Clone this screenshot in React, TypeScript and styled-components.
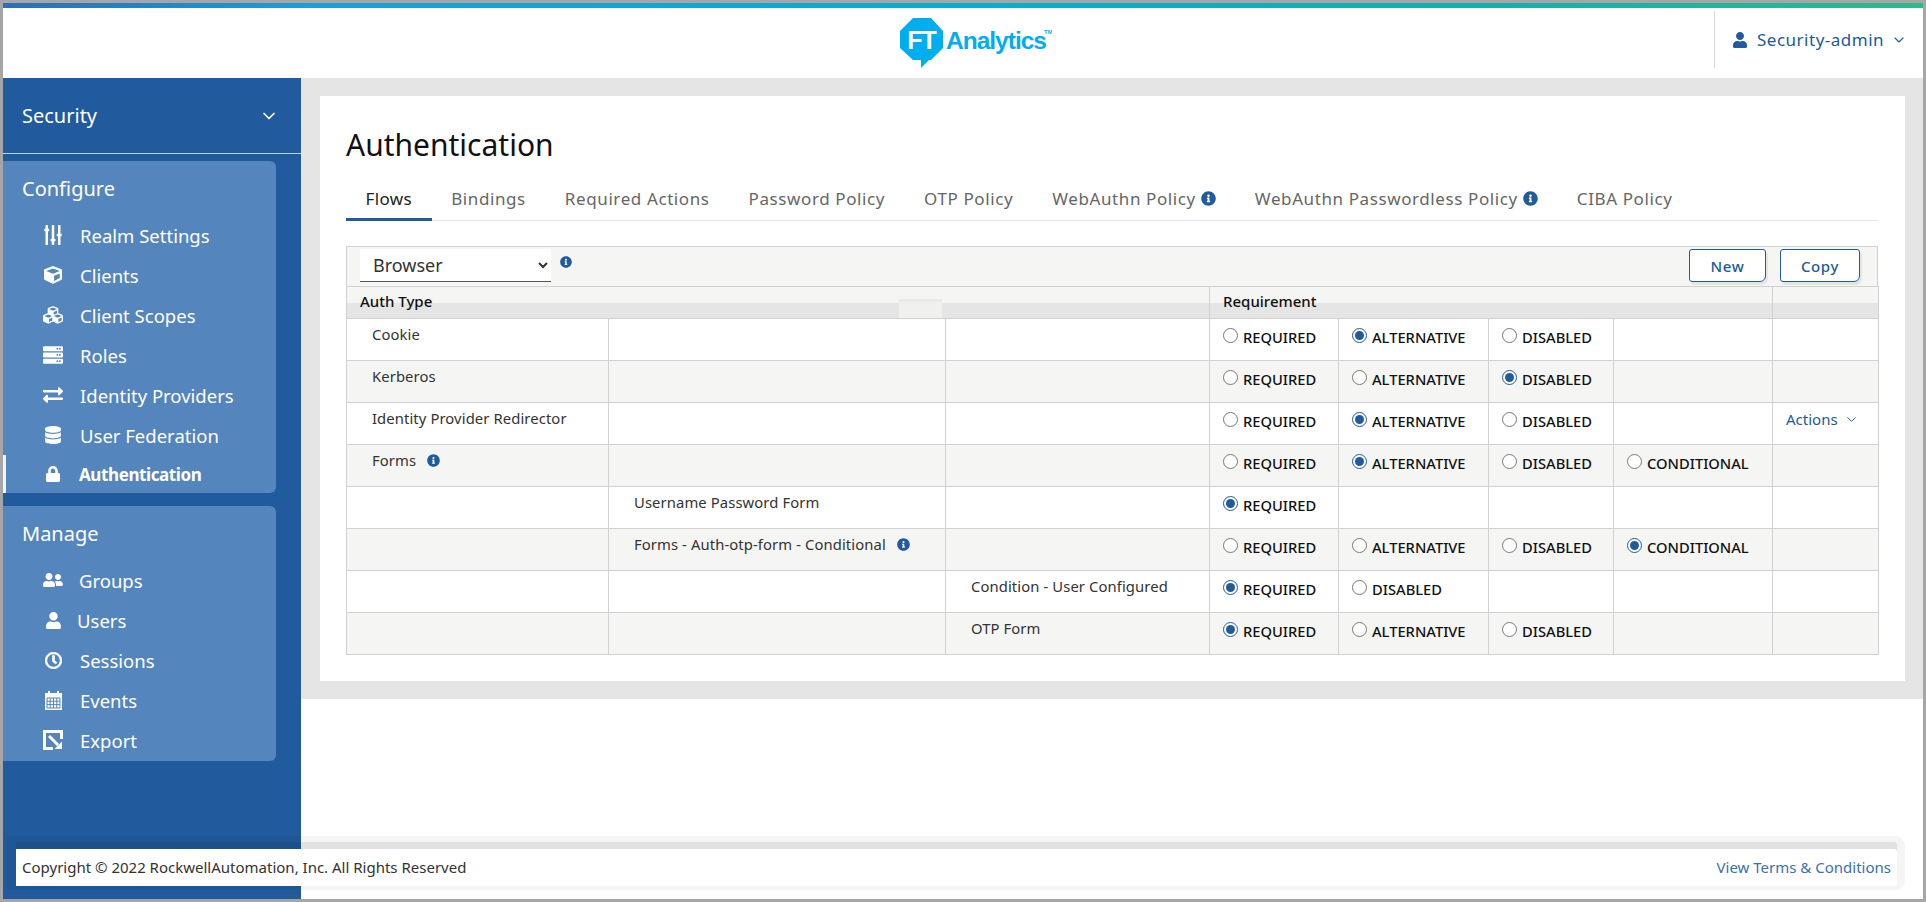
import React from "react";
import styled, { createGlobalStyle } from "styled-components";
import {
  FaSlidersH,
  FaCube,
  FaCubes,
  FaServer,
  FaExchangeAlt,
  FaDatabase,
  FaLock,
  FaUserFriends,
  FaUser,
  FaRegClock,
  FaInfoCircle,
} from "react-icons/fa";
import { ChevronDown } from "lucide-react";

const BLUE = "#215a9d";
const FONT = `"Noto Sans", "Open Sans", sans-serif`;

const GlobalStyle = createGlobalStyle`
  html, body { margin: 0; height: 100%; overflow: hidden; background: #fff; }
  #root { height: 100%; }
  * { box-sizing: border-box; }
`;

const Frame = styled.div`
  position: relative;
  display: flex;
  flex-direction: column;
  height: 902px;
  border: 3px solid #a6a6a6;
  font-family: ${FONT};
  color: #222;
`;

const TopStripe = styled.div`
  flex: none;
  height: 5px;
  background: linear-gradient(90deg, #2f6db5 0, #1b9fdb 320px, #06afd0 1000px, #14b0b0 1500px, #2fb98b 100%);
`;

const Header = styled.header`
  flex: none;
  display: grid;
  grid-template-columns: 1fr auto 1fr;
  align-items: start;
  height: 70px;
  background: #fff;
`;

const LogoBox = styled.div`
  margin: 10px 0 0 26px;
  line-height: 0;
`;

const UserMenu = styled.div`
  justify-self: end;
  display: flex;
  align-items: center;
  width: 209px;
  height: 57px;
  margin-top: 3px;
  padding-left: 17px;
  border-left: 1px solid #d9d9d9;
  color: ${BLUE};
  font-size: 17px;
  letter-spacing: 0.5px;
`;

const UserName = styled.span`
  margin: 0 7px 0 9px;
`;

const Body = styled.div`
  flex: 1;
  display: flex;
  min-height: 0;
`;

const Sidebar = styled.nav`
  flex: none;
  width: 298px;
  background: ${BLUE};
  color: #fff;
`;

const SidebarTitle = styled.div`
  display: flex;
  align-items: center;
  justify-content: space-between;
  height: 76px;
  padding: 0 22px 0 19px;
  border-bottom: 1px solid #c3d2e3;
  font-size: 20px;
`;

const NavPanel = styled.div<{ $top: number; $bottom: number }>`
  width: 273px;
  margin-top: ${(p) => p.$top}px;
  padding: 10px 0 ${(p) => p.$bottom}px;
  background: #5585bd;
  border-radius: 0 6px 6px 0;
`;

const NavHeading = styled.div`
  height: 44px;
  padding-left: 19px;
  font-size: 20px;
  line-height: 36px;
`;

const NavItem = styled.div<{ $active?: boolean; $gap: number }>`
  display: flex;
  align-items: center;
  height: ${(p) => (p.$active ? 38 : 40)}px;
  padding-left: ${(p) => (p.$active ? 37 : 40)}px;
  border-left: ${(p) => (p.$active ? "3px solid #f0f5fb" : "none")};
  font-size: ${(p) => (p.$active ? 17 : 18.5)}px;
  font-weight: ${(p) => (p.$active ? 700 : 400)};
  letter-spacing: ${(p) => (p.$active ? "-0.4px" : "0")};

  & > span:last-child {
    margin-left: ${(p) => p.$gap}px;
  }
`;

const NavIcon = styled.span`
  display: flex;
  justify-content: center;
  flex: none;
  width: 20px;
`;

const VerticalSliders = styled(FaSlidersH)`
  transform: rotate(90deg);
`;

const BoldClock = styled(FaRegClock)`
  stroke: currentColor;
  stroke-width: 24px;
`;

const Main = styled.main`
  flex: 1;
  min-width: 0;
  background: #fff;
`;

const ContentBand = styled.div`
  padding: 18px 18px 18px 19px;
  background: #e5e5e5;
`;

const Card = styled.section`
  height: 585px;
  padding: 24px 27px 0 26px;
  background: #fff;
`;

const Title = styled.h1`
  margin: 0;
  height: 50px;
  font-size: 30px;
  font-weight: 400;
  line-height: 50px;
  color: #111;
`;

const Tabs = styled.div`
  display: flex;
  height: 44px;
  margin: 7px 0 25px;
  border-bottom: 1px solid #e5e5e5;
`;

const Tab = styled.div<{ $active?: boolean }>`
  display: flex;
  align-items: center;
  gap: 5px;
  height: 44px;
  padding: 2px 19.5px 0;
  border-bottom: 3px solid ${(p) => (p.$active ? BLUE : "transparent")};
  color: ${(p) => (p.$active ? "#222" : "#666")};
  font-size: 17px;
  letter-spacing: ${(p) => (p.$active ? "0.4px" : "0.6px")};
`;

const Info = styled(FaInfoCircle)`
  flex: none;
  color: ${BLUE};
`;

const Toolbar = styled.div`
  display: flex;
  align-items: flex-start;
  height: 40px;
  padding: 2px 17px 0 13px;
  border: 1px solid #d1d1d1;
  border-bottom: none;
  background: #f5f5f3;
`;

const FlowSelect = styled.select`
  width: 191px;
  height: 33px;
  padding-left: 9px;
  border: none;
  border-bottom: 1px solid #555;
  border-radius: 0;
  background: #fff;
  color: #333;
  font-family: ${FONT};
  font-size: 18px;
`;

const SelectInfo = styled.span`
  margin: 7px auto 0 9px;
  line-height: 0;
`;

const OutlineButton = styled.button<{ $width: number }>`
  width: ${(p) => p.$width}px;
  height: 33px;
  margin-left: 14px;
  border: 1.5px solid ${BLUE};
  border-radius: 3px 3px 6px 3px;
  background: #fff;
  box-shadow: 2px 3px 0 #e5e5e5;
  color: ${BLUE};
  font-family: ${FONT};
  font-size: 15px;
  font-weight: 500;
  letter-spacing: 0.6px;
`;

const TableWrap = styled.div`
  position: relative;
`;

const HeaderPatch = styled.div`
  position: absolute;
  left: 553px;
  top: 13px;
  width: 43px;
  height: 19px;
  background: linear-gradient(#e9e9e9 3px, #f0f0ee 3px);
`;

const FlowTable = styled.table`
  width: 1532px;
  table-layout: fixed;
  border-collapse: collapse;

  th,
  td {
    border: 1px solid #d1d1d1;
    vertical-align: top;
  }

  tbody tr:nth-child(even) {
    background: #f5f5f3;
  }
`;

const HeadRow = styled.tr`
  height: 32px;
  background: linear-gradient(#f5f5f3 50%, #e5e5e5 50%);
`;

const HeadCell = styled.th`
  padding: 3px 0 0 13px;
  text-align: left;
  font-size: 15px;
  font-weight: 500;
  line-height: 22px;
  color: #111;
`;

const Row = styled.tr`
  height: 42px;
`;

const NameCell = styled.td`
  padding: 0 0 0 25px;
  font-size: 14.8px;
  line-height: 30px;
  color: #333;
`;

const NameInner = styled.span`
  display: inline-flex;
  align-items: center;
  gap: 11px;
  letter-spacing: 0.1px;
`;

const OptionCell = styled.td`
  padding: 0 0 0 13px;
`;

const OptionLabel = styled.label`
  display: flex;
  align-items: flex-start;
  height: 40px;
  font-size: 14.7px;
  font-weight: 500;
  line-height: 36px;
  color: #111;
`;

const Radio = styled.input`
  flex: none;
  width: 15px;
  height: 15px;
  margin: 9px 5px 0 0;
  accent-color: ${BLUE};
`;

const ActionsLink = styled.div`
  display: flex;
  align-items: center;
  gap: 6px;
  padding-left: 12px;
  height: 26px;
  margin-top: 2px;
  color: ${BLUE};
  font-size: 15px;
`;

const Footer = styled.footer`
  position: absolute;
  left: 13px;
  right: 26px;
  bottom: 13px;
  display: flex;
  align-items: center;
  justify-content: space-between;
  height: 37px;
  padding: 0 6px 1px 6px;
  background: #fff;
  box-shadow: 0 -7px 0 rgba(0, 0, 0, 0.08), -0.5px -4.5px 0 8.5px rgba(0, 0, 0, 0.04);
  border-radius: 0 3px 3px 0;
  font-size: 15px;
  color: #333;
`;

const FooterLink = styled.span`
  color: #3a6fb0;
`;

const ExportIcon = () => (
  <svg width="20" height="20" viewBox="0 0 20 20" fill="none" stroke="#fff">
    <path d="M10 18.5H1.5V1.5H18.5V9" strokeWidth="3" />
    <path d="M6 6L15 15" strokeWidth="3" />
    <path d="M19 19H11.5L19 11.5Z" fill="#fff" stroke="none" />
  </svg>
);

const CalendarIcon = () => (
  <svg width="19" height="20" viewBox="0 0 19 20">
    <path d="M1 3H4V1H6V3H13V1H15V3H18V20H1Z" fill="#fff" />
    <path
      d="M3 8H16V18H3ZM3 11.2H16M3 14.6H16M6.2 8V18M9.5 8V18M12.8 8V18"
      fill="none"
      stroke="#5585bd"
      strokeWidth="1"
    />
  </svg>
);

const Logo = () => (
  <svg width="152" height="50" viewBox="0 0 152 50">
    <path d="M13 0H31L43 13V30L31 42H29L21 50V42H13L0 30V13Z" fill="#00aeef" />
    <text x="21.5" y="31" textAnchor="middle" fontFamily="Liberation Sans" fontWeight="700" fontSize="25" letterSpacing="-1" fill="#fff">
      FT
    </text>
    <text x="46" y="31" fontFamily="Liberation Sans" fontWeight="700" fontSize="24.5" letterSpacing="-1" fill="#00aeef">
      Analytics
    </text>
    <text x="144" y="16" fontFamily="Liberation Sans" fontWeight="700" fontSize="6" fill="#00aeef">
      TM
    </text>
  </svg>
);

const configureItems = [
  { label: "Realm Settings", icon: <VerticalSliders size={20} />, gap: 17 },
  { label: "Clients", icon: <FaCube size={18} />, gap: 17 },
  { label: "Client Scopes", icon: <FaCubes size={22} />, gap: 17 },
  { label: "Roles", icon: <FaServer size={20} />, gap: 17 },
  { label: "Identity Providers", icon: <FaExchangeAlt size={20} />, gap: 17 },
  { label: "User Federation", icon: <FaDatabase size={18} />, gap: 17 },
];

const manageItems = [
  { label: "Groups", icon: <FaUserFriends size={20} />, gap: 16 },
  { label: "Users", icon: <FaUser size={17} />, gap: 14 },
  { label: "Sessions", icon: <BoldClock size={17} />, gap: 17 },
  { label: "Events", icon: <CalendarIcon />, gap: 17 },
  { label: "Export", icon: <ExportIcon />, gap: 17 },
];

const tabs = [
  { label: "Flows", active: true },
  { label: "Bindings" },
  { label: "Required Actions" },
  { label: "Password Policy" },
  { label: "OTP Policy" },
  { label: "WebAuthn Policy", info: true },
  { label: "WebAuthn Passwordless Policy", info: true },
  { label: "CIBA Policy" },
];

type FlowRow = {
  name: string;
  level: number;
  info?: boolean;
  options: string[];
  checked: number;
  actions?: boolean;
};

const ALL = ["REQUIRED", "ALTERNATIVE", "DISABLED"];

const rows: FlowRow[] = [
  { name: "Cookie", level: 0, options: ALL, checked: 1 },
  { name: "Kerberos", level: 0, options: ALL, checked: 2 },
  { name: "Identity Provider Redirector", level: 0, options: ALL, checked: 1, actions: true },
  { name: "Forms", level: 0, info: true, options: [...ALL, "CONDITIONAL"], checked: 1 },
  { name: "Username Password Form", level: 1, options: ["REQUIRED"], checked: 0 },
  { name: "Forms - Auth-otp-form - Conditional", level: 1, info: true, options: [...ALL, "CONDITIONAL"], checked: 3 },
  { name: "Condition - User Configured", level: 2, options: ["REQUIRED", "DISABLED"], checked: 0 },
  { name: "OTP Form", level: 2, options: ALL, checked: 0 },
];

const App = () => {
  return (
    <Frame>
      <GlobalStyle />
      <TopStripe />
      <Header>
        <div />
        <LogoBox>
          <Logo />
        </LogoBox>
        <UserMenu>
          <FaUser size={16} />
          <UserName>Security-admin</UserName>
          <ChevronDown size={16} strokeWidth={1.6} />
        </UserMenu>
      </Header>
      <Body>
        <Sidebar>
          <SidebarTitle>
            Security
            <ChevronDown size={20} strokeWidth={2} />
          </SidebarTitle>
          <NavPanel $top={7} $bottom={0}>
            <NavHeading>Configure</NavHeading>
            {configureItems.map((item) => (
              <NavItem key={item.label} $gap={item.gap}>
                <NavIcon>{item.icon}</NavIcon>
                <span>{item.label}</span>
              </NavItem>
            ))}
            <NavItem $active $gap={16}>
              <NavIcon>
                <FaLock size={16} />
              </NavIcon>
              <span>Authentication</span>
            </NavItem>
          </NavPanel>
          <NavPanel $top={13} $bottom={1}>
            <NavHeading>Manage</NavHeading>
            {manageItems.map((item) => (
              <NavItem key={item.label} $gap={item.gap}>
                <NavIcon>{item.icon}</NavIcon>
                <span>{item.label}</span>
              </NavItem>
            ))}
          </NavPanel>
        </Sidebar>
        <Main>
          <ContentBand>
            <Card>
              <Title>Authentication</Title>
              <Tabs>
                {tabs.map((tab) => (
                  <Tab key={tab.label} $active={tab.active}>
                    {tab.label}
                    {tab.info && <Info size={15} />}
                  </Tab>
                ))}
              </Tabs>
              <Toolbar>
                <FlowSelect defaultValue="Browser">
                  <option>Browser</option>
                </FlowSelect>
                <SelectInfo>
                  <Info size={12} />
                </SelectInfo>
                <OutlineButton $width={77}>New</OutlineButton>
                <OutlineButton $width={80}>Copy</OutlineButton>
              </Toolbar>
              <TableWrap>
                <FlowTable>
                  <colgroup>
                    {[262, 337, 264, 129, 150, 125, 159, 106].map((w, i) => (
                      <col key={i} width={w} />
                    ))}
                  </colgroup>
                  <thead>
                    <HeadRow>
                      <HeadCell colSpan={3}>Auth Type</HeadCell>
                      <HeadCell colSpan={4}>Requirement</HeadCell>
                      <HeadCell />
                    </HeadRow>
                  </thead>
                  <tbody>
                    {rows.map((row, r) => (
                      <Row key={row.name}>
                        {[0, 1, 2].map((level) => (
                          <NameCell key={level}>
                            {row.level === level && (
                              <NameInner>
                                {row.name}
                                {row.info && <Info size={13} />}
                              </NameInner>
                            )}
                          </NameCell>
                        ))}
                        {[0, 1, 2, 3].map((i) => (
                          <OptionCell key={i}>
                            {row.options[i] && (
                              <OptionLabel>
                                <Radio type="radio" name={`row-${r}`} defaultChecked={row.checked === i} />
                                {row.options[i]}
                              </OptionLabel>
                            )}
                          </OptionCell>
                        ))}
                        <td>
                          {row.actions && (
                            <ActionsLink>
                              Actions
                              <ChevronDown size={15} strokeWidth={1.6} />
                            </ActionsLink>
                          )}
                        </td>
                      </Row>
                    ))}
                  </tbody>
                </FlowTable>
                <HeaderPatch />
              </TableWrap>
            </Card>
          </ContentBand>
        </Main>
      </Body>
      <Footer>
        <span>Copyright © 2022 RockwellAutomation, Inc. All Rights Reserved</span>
        <FooterLink>View Terms &amp; Conditions</FooterLink>
      </Footer>
    </Frame>
  );
};

export default App;
